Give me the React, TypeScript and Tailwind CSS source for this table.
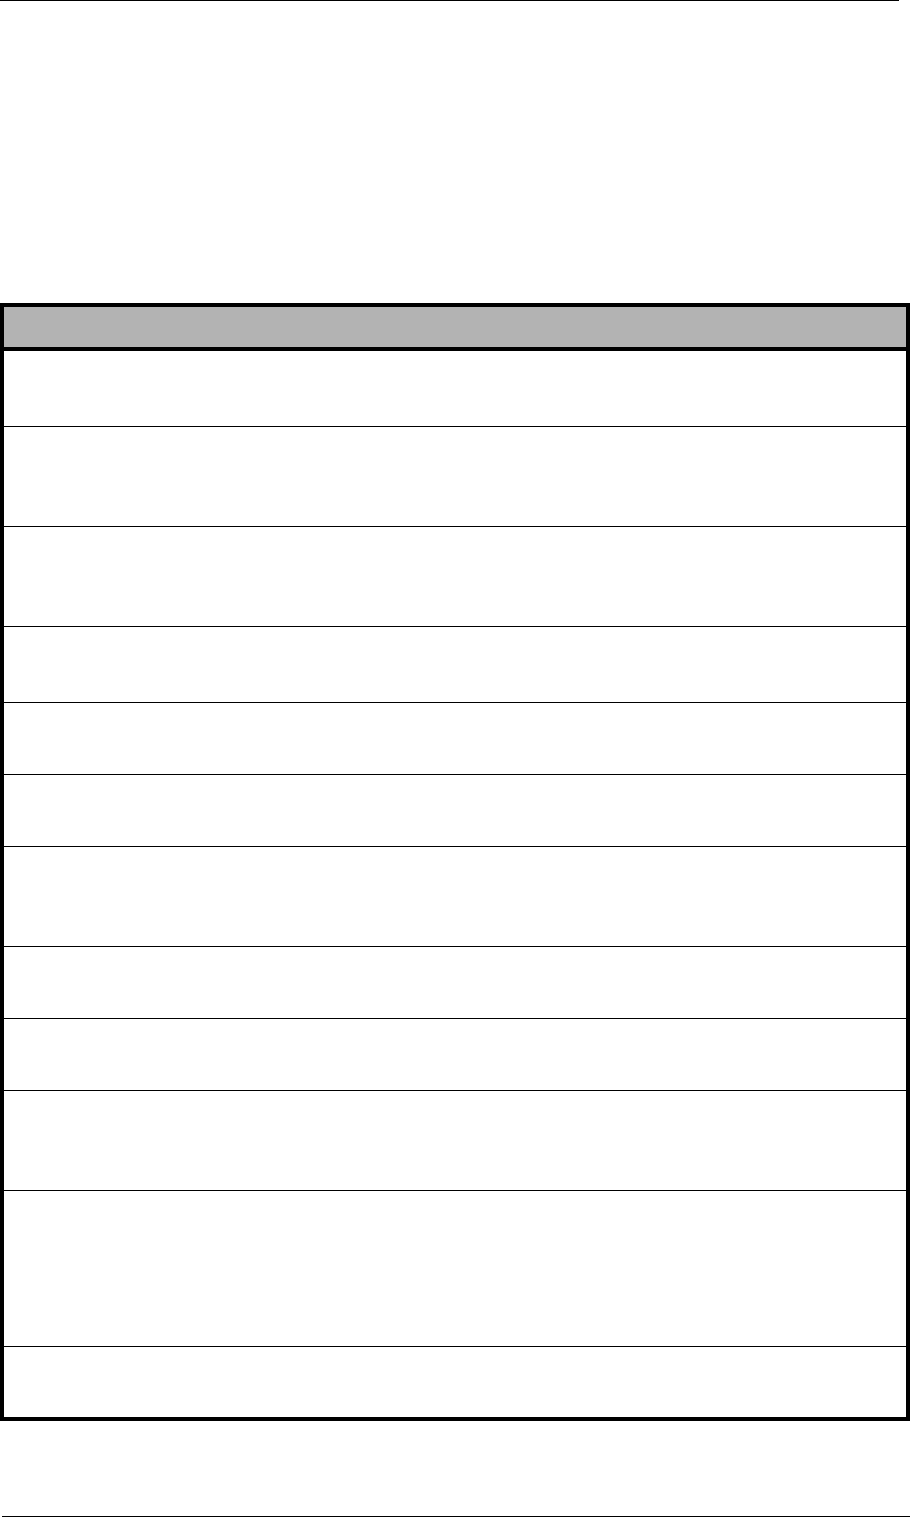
const rows = [76, 100, 100, 76, 72, 72, 100, 72, 72, 100, 156, 70]

export default function App() {
  return (
    <div className="w-[910px] h-[1517px] bg-white flex flex-col font-['Liberation_Sans',sans-serif]">
      <div className="h-px w-[899px] bg-black" />
      <div className="h-[302px]" />

      <div className="w-[910px] border-4 border-black flex flex-col">
        <div className="h-[44px] bg-[#b3b3b3] border-b-4 border-black" />
        {rows.map((h, i) => (
          <div
            key={i}
            className={i < rows.length - 1 ? "border-b border-black" : ""}
            style={{ height: h }}
          />
        ))}
      </div>

      <div className="h-[95px]" />
      <div className="ml-[2px] h-px w-[908px] bg-black" />
    </div>
  )
}
